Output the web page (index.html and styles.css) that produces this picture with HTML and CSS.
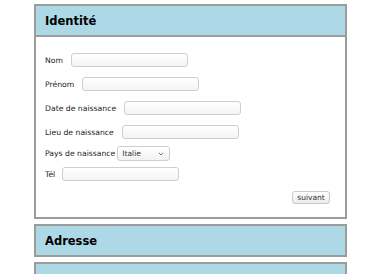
FILE: index.html
```html
<!DOCTYPE html>
<html lang="fr">
<head>
    <meta charset="UTF-8">
    <meta name="viewport" content="width=device-width, initial-scale=1.0">
    <title>Inscription</title>
    <link rel="stylesheet" href="styles.css">
</head>
<body>
    <main class="steps">
        <section class="step">
            <h2 class="step-title">Identité</h2>
            <form class="step-body">
                <div class="row">
                    <label for="nom">Nom</label>
                    <input type="text" id="nom" class="field">
                </div>
                <div class="row">
                    <label for="prenom">Prénom</label>
                    <input type="text" id="prenom" class="field">
                </div>
                <div class="row">
                    <label for="dateNaissance">Date de naissance</label>
                    <input type="text" id="dateNaissance" class="field">
                </div>
                <div class="row">
                    <label for="lieuNaissance">Lieu de naissance</label>
                    <input type="text" id="lieuNaissance" class="field">
                </div>
                <div class="row row-select">
                    <label>Pays de naissance</label>
                    <div class="select">
                        <span>Italie</span>
                        <svg width="6" height="4" viewBox="0 0 6 4"><path d="M0.8 0.8 L3 3 L5.2 0.8" fill="none" stroke="#777" stroke-width="1"/></svg>
                    </div>
                </div>
                <div class="row row-tel">
                    <label for="tel">Tél</label>
                    <input type="text" id="tel" class="field">
                </div>
                <div class="actions">
                    <button type="button" class="btn">suivant</button>
                </div>
            </form>
        </section>

        <section class="step">
            <h2 class="step-title">Adresse</h2>
        </section>

        <section class="step">
            <h2 class="step-title">&nbsp;</h2>
        </section>
    </main>
</body>
</html>
```

FILE: styles.css
```css
body {
    font-family: "DejaVu Sans", Verdana, sans-serif;
    margin: 0;
    padding: 4px 0 0 34px;
    background-color: #fff;
    color: #1a1a1a;
}

.steps {
    width: 313px;
}

.step {
    border: 2px solid #9c9c9c;
    background-color: #fff;
    margin-bottom: 5px;
}

.step-title {
    margin: 0;
    height: 29px;
    line-height: 30px;
    padding-left: 9px;
    background-color: #add8e6;
    font-size: 11.5px;
    font-weight: bold;
    color: #000;
}

.step-body {
    border-top: 2px solid #9c9c9c;
    padding: 16px 15px 13px 9px;
}

.row {
    display: flex;
    align-items: center;
    height: 14px;
    margin-bottom: 10px;
    font-size: 7.7px;
}

.row .field {
    margin-left: 8px;
}

.row-select {
    height: 15px;
    margin-top: -3px;
    margin-bottom: 6px;
}

.row-tel .field {
    margin-left: 7px;
}

.field {
    box-sizing: border-box;
    width: 117px;
    height: 14px;
    padding: 0;
    border: 1px solid #cfcfcf;
    border-radius: 3px;
    background: linear-gradient(#fff, #f4f4f4);
}

.select {
    box-sizing: border-box;
    display: flex;
    align-items: center;
    justify-content: space-between;
    width: 53px;
    height: 15px;
    margin-left: 2px;
    padding: 0 5px 0 4px;
    border: 1px solid #cfcfcf;
    border-radius: 3px;
    background: linear-gradient(#fff, #f2f2f2);
    color: #333;
    font-size: 7.5px;
}

.actions {
    display: flex;
    justify-content: flex-end;
}

.btn {
    box-sizing: border-box;
    width: 38px;
    height: 13px;
    padding: 0;
    border: 1px solid #c8c8c8;
    border-radius: 3px;
    background: linear-gradient(#fff, #ececec);
    font-family: "DejaVu Sans", Verdana, sans-serif;
    font-size: 7.5px;
    color: #333;
}
```
